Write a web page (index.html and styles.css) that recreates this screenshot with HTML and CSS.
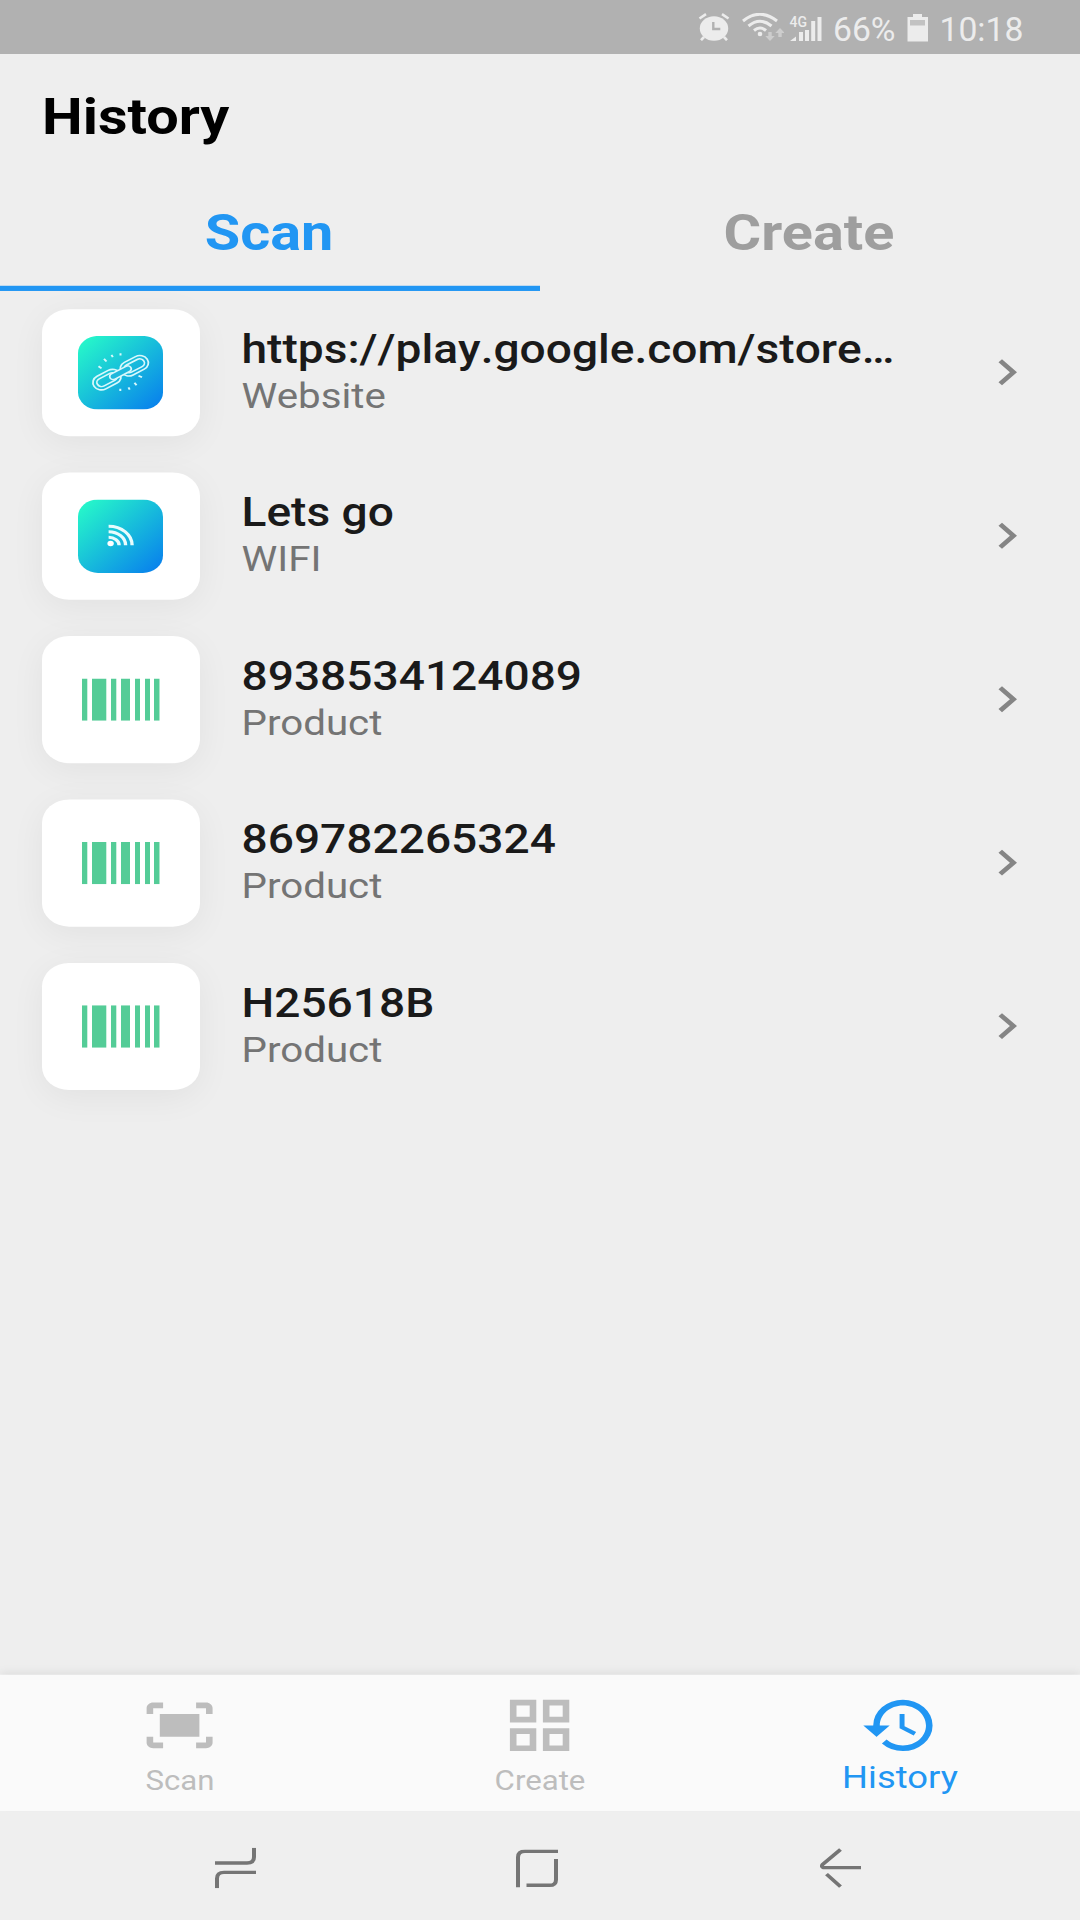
FILE: index.html
```html
<!DOCTYPE html>
<html lang="en">
<head>
<meta charset="utf-8">
<title>History</title>
<link rel="stylesheet" href="styles.css">
</head>
<body>
<svg class="defs" aria-hidden="true">
  <defs>
    <linearGradient id="aqua" x1="0.1" y1="0.08" x2="1" y2="0.98">
      <stop offset="0" stop-color="#25f3cb"/>
      <stop offset="1" stop-color="#077cee"/>
    </linearGradient>
    <symbol id="tile" viewBox="0 0 85 85">
      <rect width="85" height="85" rx="20" fill="url(#aqua)"/>
    </symbol>
    <symbol id="barcode" viewBox="0 0 78 49">
      <path fill="#54cc97" d="M0 0h5.3v49H0zM10 0h14.3v49H10zM29 0h5.3v49H29zM39 0h9v49h-9zM53 0h5v49h-5zM63 0h5v49h-5zM72 0h5.5v49H72z"/>
    </symbol>
    <symbol id="chevron" viewBox="0 0 24 24">
      <path d="M10 6L8.59 7.41 13.17 12l-4.58 4.59L10 18l6-6z"/>
    </symbol>
  </defs>
</svg>

<header class="status">
  <svg class="alarm" viewBox="0 0 32 28" width="32" height="28">
    <ellipse cx="16" cy="15.5" rx="14.2" ry="12.2"/>
    <path class="line" d="M1.5 5.5 8 1.2M30.5 5.5 24 1.2M6 24l-3 3.2M26 24l3 3.2"/>
    <path class="hand" d="M15.3 9v7h7"/>
  </svg>
  <svg class="wifi" viewBox="0 0 42 28" width="42" height="28">
    <path class="arc" d="M1 8Q18-5.500 35 8M6.500 13Q18 3.500 29.500 13M12 17.500Q18 12.500 24 17.500"/>
    <circle cx="18" cy="21" r="2.3"/>
    <path class="dim" d="M26.300 19h3.400v4h3L28 28l-4.700-5h3zM36.300 24h3.400v-4h3L38 15l-4.700 5h3z"/>
  </svg>
  <span class="signal">
    <svg viewBox="0 0 32 25" width="32" height="25">
      <path d="M0 25 6 20.500V25zM9 16h4v9H9zM15 14h4v11h-4zM21.200 5h4v20h-4zM27.500 1H31.500v24h-4z"/>
    </svg>
    <span class="net">4G</span>
  </span>
  <span class="pct">66%</span>
  <svg class="battery" viewBox="0 0 22 28" width="22" height="28">
    <path d="M6 0h9v3h6v24.500H.5V3H6z"/><path class="gap" d="M3 6h15v5.500H3z"/>
  </svg>
  <span class="time">10:18</span>
</header>

<div class="viewport">
  <div class="app">
    <h1 class="title">History</h1>
    <nav class="tabs">
      <div class="tab active">Scan</div>
      <div class="tab">Create</div>
    </nav>

    <main class="list">
      <div class="row">
        <div class="card">
          <svg width="85" height="85" viewBox="0 0 85 85">
            <use href="#tile" width="85" height="85"/>
            <g class="chain">
              <g transform="translate(29 50.500) rotate(-31)">
                <rect x="-15" y="-8.500" width="30" height="17" rx="8.500"/>
                <rect x="-11" y="-4.800" width="22" height="9.600" rx="4.800"/>
              </g>
              <g transform="translate(56.300 34.500) rotate(-31)">
                <rect x="-15" y="-8.500" width="30" height="17" rx="8.500"/>
                <rect x="-11" y="-4.800" width="22" height="9.600" rx="4.800"/>
              </g>
              <g transform="translate(42.500 42.500) rotate(-31)">
                <rect class="bar" x="-12" y="-3.500" width="24" height="7" rx="3.500"/>
              </g>
              <path class="ray" d="M20.500 35l3 2.500M26 26.500l2.500 3M33.500 22l1.300 2.500M42.500 20v2.600M42.300 61v2.600M50.500 59.500l1.200 2.500M56.500 54l2 3M60.500 46l3.500 1.800"/>
            </g>
          </svg>
        </div>
        <div class="text"><div class="name">https://play.google.com/store…</div><div class="kind">Website</div></div>
        <svg class="chev" width="60" height="60"><use href="#chevron"/></svg>
      </div>
      <div class="row">
        <div class="card">
          <svg width="85" height="85" viewBox="0 0 85 85">
            <use href="#tile" width="85" height="85"/>
            <circle cx="32.600" cy="51" r="3.200" fill="#fff"/>
            <path class="feed" d="M30.600 31A23.500 22 0 0 1 54.100 53M30.600 37.300A17 15.700 0 0 1 47.600 53M30.600 43.700A10.500 9.300 0 0 1 41.100 53"/>
          </svg>
        </div>
        <div class="text"><div class="name">Lets go</div><div class="kind">WIFI</div></div>
        <svg class="chev" width="60" height="60"><use href="#chevron"/></svg>
      </div>
      <div class="row">
        <div class="card"><svg width="78" height="49"><use href="#barcode"/></svg></div>
        <div class="text"><div class="name">8938534124089</div><div class="kind">Product</div></div>
        <svg class="chev" width="60" height="60"><use href="#chevron"/></svg>
      </div>
      <div class="row">
        <div class="card"><svg width="78" height="49"><use href="#barcode"/></svg></div>
        <div class="text"><div class="name">869782265324</div><div class="kind">Product</div></div>
        <svg class="chev" width="60" height="60"><use href="#chevron"/></svg>
      </div>
      <div class="row">
        <div class="card"><svg width="78" height="49"><use href="#barcode"/></svg></div>
        <div class="text"><div class="name">H25618B</div><div class="kind">Product</div></div>
        <svg class="chev" width="60" height="60"><use href="#chevron"/></svg>
      </div>
    </main>

    <nav class="bottom">
      <div class="item">
        <svg width="79.200" height="79.200" viewBox="0 0 24 24"><path d="M17 4h3c1.100 0 2 .9 2 2v2h-2V6h-3V4zM4 8V6h3V4H4c-1.100 0-2 .9-2 2v2h2zm16 8v2h-3v2h3c1.100 0 2-.9 2-2v-2h-2zM7 18H4v-2H2v2c0 1.100.9 2 2 2h3v-2zM18 8H6v8h12V8z"/></svg>
        <span>Scan</span>
      </div>
      <div class="item">
        <svg width="79.200" height="79.200" viewBox="0 0 24 24"><path d="M3 3v8h8V3H3zm6 6H5V5h4v4zm-6 4v8h8v-8H3zm6 6H5v-4h4v4zm4-16v8h8V3h-8zm6 6h-4V5h4v4zm-6 4v8h8v-8h-8zm6 6h-4v-4h4v4z"/></svg>
        <span>Create</span>
      </div>
      <div class="item selected">
        <svg width="79.200" height="79.200" viewBox="0 0 24 24"><path d="M13 3a9 9 0 0 0-9 9H1l3.890 3.890.07.14L9 12H6c0-3.870 3.130-7 7-7s7 3.130 7 7-3.130 7-7 7c-1.930 0-3.680-.79-4.940-2.060l-1.420 1.420A8.954 8.954 0 0 0 13 21a9 9 0 0 0 0-18zm-1 5v5l4.280 2.540.72-1.210-3.500-2.080V8H12z"/></svg>
        <span>History</span>
      </div>
    </nav>

    <footer class="system">
      <svg width="41" height="47" viewBox="0 0 41 47"><path d="M0 17.700H32q7 0 7-7V0M41 28.500H9q-7 0-7 7V47"/></svg>
      <svg class="home" width="42" height="44" viewBox="0 0 42 44"><path d="M2 44V9q0-7 7-7H42M40 11V35q0 6.500-6.500 6.500H10.500"/></svg>
      <svg width="41" height="47" viewBox="0 0 41 47"><path d="M41 23H3.500Q1 22 2.500 19.500L20.500 2M6.500 30.500 20.500 45"/></svg>
    </footer>
  </div>
</div>
</body>
</html>
```
FILE: styles.css
```css
* { box-sizing: border-box; }

body {
  margin: 0;
  width: 1080px;
  height: 1920px;
  overflow: hidden;
  display: flex;
  flex-direction: column;
  background: #eeeeee;
  font-family: Roboto, "Noto Sans", sans-serif;
}

svg { display: block; flex: none; }
.defs { position: absolute; width: 0; height: 0; }

/* Status bar */
.status {
  flex: none;
  height: 54px;
  padding: 13px 56px 0 698px;
  display: flex;
  align-items: flex-start;
  background: #b1b1b1;
  color: #ececec;
  fill: #ececec;
  font-size: 33.7px;
  line-height: 40px;
  white-space: nowrap;
}
.status .line { fill: none; stroke: #ececec; stroke-width: 2.6; }
.status .hand { fill: none; stroke: #b1b1b1; stroke-width: 2.4; }
.status .arc { fill: none; stroke: #ececec; stroke-width: 3; }
.status .dim { fill: #cdcdcd; }
.status .gap { fill: #c2c2c2; }
.wifi { margin-left: 12px; }
.signal { position: relative; margin: 3px 0 0 6px; }
.net {
  position: absolute;
  left: -0.5px;
  top: 0.5px;
  font-size: 14px;
  line-height: 10px;
  font-weight: 500;
}
.pct { width: 62px; margin: -3px 0 0 11px; }
.battery { margin: 0.5px 0 0 11.5px; }
.time { margin: -3px 0 0 11px; }

/* The app is laid out on a 1080 x 2220 panel and fitted to the window height */
.viewport { height: 1866px; overflow: hidden; }
.app {
  width: 1080px;
  height: 2157.6px;
  display: flex;
  flex-direction: column;
  transform: scaleY(0.86486);
  transform-origin: 0 0;
}

.title {
  margin: 0;
  height: 135.8px;
  padding: 38.2px 0 0 42px;
  font-size: 57.6px;
  line-height: 70px;
  font-weight: 700;
  color: #000;
}

.tabs { display: flex; height: 138px; }
.tab {
  flex: 1;
  padding: 37px 2px 0 0;
  text-align: center;
  font-size: 57.6px;
  line-height: 70px;
  font-weight: 700;
  color: #9e9e9e;
  border-bottom: 6px solid transparent;
}
.tab.active { color: #2196f3; border-color: #2196f3; }

.list { flex: 1; }
.row {
  display: flex;
  align-items: center;
  height: 189px;
  padding: 0 43.5px 0 42px;
}
.card {
  flex: none;
  width: 157.5px;
  height: 147px;
  display: flex;
  align-items: center;
  justify-content: center;
  background: #fff;
  border-radius: 27px;
  box-shadow: 0 8px 38px rgba(0, 0, 0, 0.055);
}
.chain { fill: none; stroke: #d8f8fb; stroke-width: 1.8; }
.chain .bar { fill: #1fb9dc; }
.chain .ray { stroke-width: 2; }
.feed { fill: none; stroke: #e9fcfd; stroke-width: 3.4; }

.text { flex: 1; margin-left: 42px; padding-bottom: 3.2px; white-space: nowrap; }
.name { font-size: 46.1px; line-height: 56px; font-weight: 500; font-kerning: none; color: #1a1a1a; }
.kind { margin-top: 2px; font-size: 40.3px; line-height: 49px; color: #747474; }
.chev { fill: #858585; }

.bottom {
  flex: none;
  display: flex;
  height: 157.6px;
  background: #fafafa;
  box-shadow: 0 -2px 10px rgba(0, 0, 0, 0.08);
}
.item {
  flex: 1;
  display: flex;
  flex-direction: column;
  align-items: center;
  padding-top: 19px;
  font-size: 31.2px;
  line-height: 49px;
  color: #bdbdbd;
  fill: #bdbdbd;
}
.item.selected { color: #2196f3; fill: #2196f3; font-size: 36.4px; line-height: 42.5px; }

.system {
  flex: none;
  height: 126px;
  display: flex;
  justify-content: space-between;
  align-items: center;
  padding: 6px 219px 0 215px;
  background: #efefef;
}
.system path { fill: none; stroke: #757575; stroke-width: 4; }
.home { margin-right: 2px; }
```
